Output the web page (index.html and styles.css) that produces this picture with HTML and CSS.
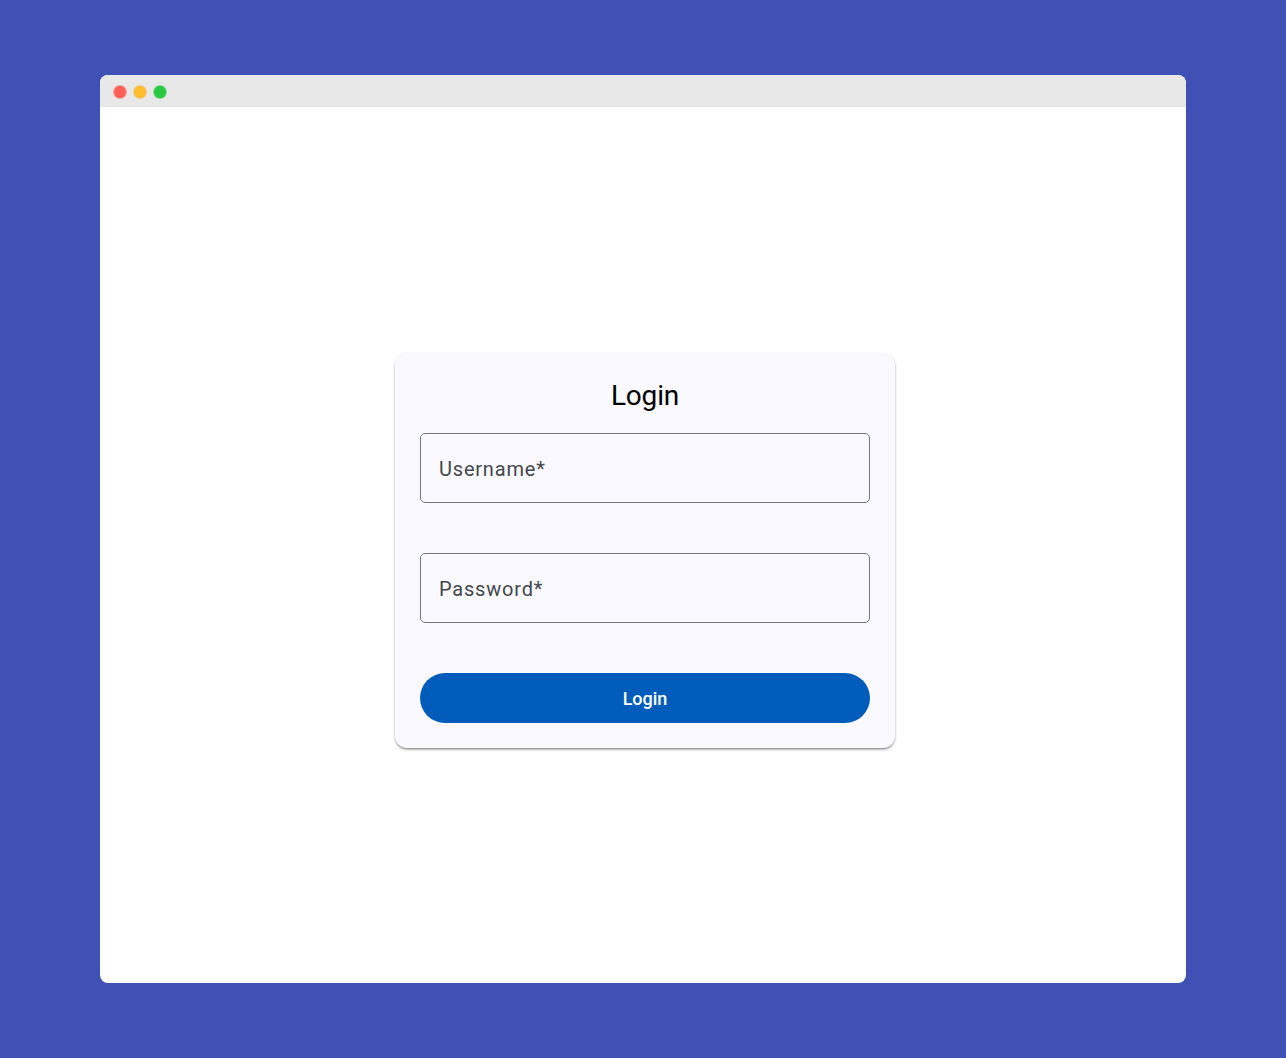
FILE: index.html
```html
<!DOCTYPE html>
<html lang="en">
<head>
<meta charset="utf-8">
<title>Login</title>
<link rel="stylesheet" href="styles.css">
</head>
<body>
<div class="window">
  <div class="titlebar">
    <span class="dot dot-red"></span>
    <span class="dot dot-yellow"></span>
    <span class="dot dot-green"></span>
  </div>
  <main class="content">
    <form class="card">
      <h1 class="title">Login</h1>
      <div class="field"><span class="label">Username*</span></div>
      <div class="field"><span class="label">Password*</span></div>
      <button class="submit" type="button">Login</button>
    </form>
  </main>
</div>
</body>
</html>
```
FILE: styles.css
```css
* { box-sizing: border-box; }
html, body { margin: 0; height: 100%; }
body {
  background: #3f51b5;
  padding: 75px 100px;
  font-family: Roboto, sans-serif;
}
.window {
  height: 908px;
  background: #fff;
  border-radius: 8px;
  display: flex;
  flex-direction: column;
}
.titlebar {
  height: 32px;
  background: #e8e8e8;
  border-radius: 8px 8px 0 0;
  display: flex;
  align-items: center;
  gap: 8px;
  padding: 2px 14px 0;
}
.dot {
  width: 12px;
  height: 12px;
  border-radius: 50%;
}
.dot-red { background: #ff5f57; box-shadow: 0 0 0 1px rgba(255,95,87,.55); }
.dot-yellow { background: #febc2e; box-shadow: 0 0 0 1px rgba(254,188,46,.55); }
.dot-green { background: #28c840; box-shadow: 0 0 0 1px rgba(40,200,64,.55); }
.content {
  flex: 1;
  display: flex;
  align-items: center;
  justify-content: center;
  padding: 11px 0 0 4px;
}
.card {
  width: 500px;
  height: 395px;
  padding: 25px;
  background: #f9f9ff;
  border-radius: 12px;
  box-shadow: 0 2px 3px -1px rgba(0,0,0,.5), 0 1px 3px 0 rgba(0,0,0,.12);
  display: flex;
  flex-direction: column;
}
.title {
  margin: 0 0 20px;
  height: 35px;
  font-size: 28px;
  font-weight: 400;
  line-height: 35px;
  letter-spacing: -.2px;
  text-align: center;
  color: #000;
}
.field {
  height: 70px;
  margin-bottom: 50px;
  border: 1px solid #74777f;
  border-radius: 5px;
  display: flex;
  align-items: center;
  padding: 2px 18px 0;
}
.label {
  font-size: 20px;
  letter-spacing: .8px;
  color: #44474e;
}
.submit {
  height: 50px;
  border: 0;
  border-radius: 25px;
  background: #005cbb;
  color: #fff;
  font: 500 18px Roboto, sans-serif;
}
```
